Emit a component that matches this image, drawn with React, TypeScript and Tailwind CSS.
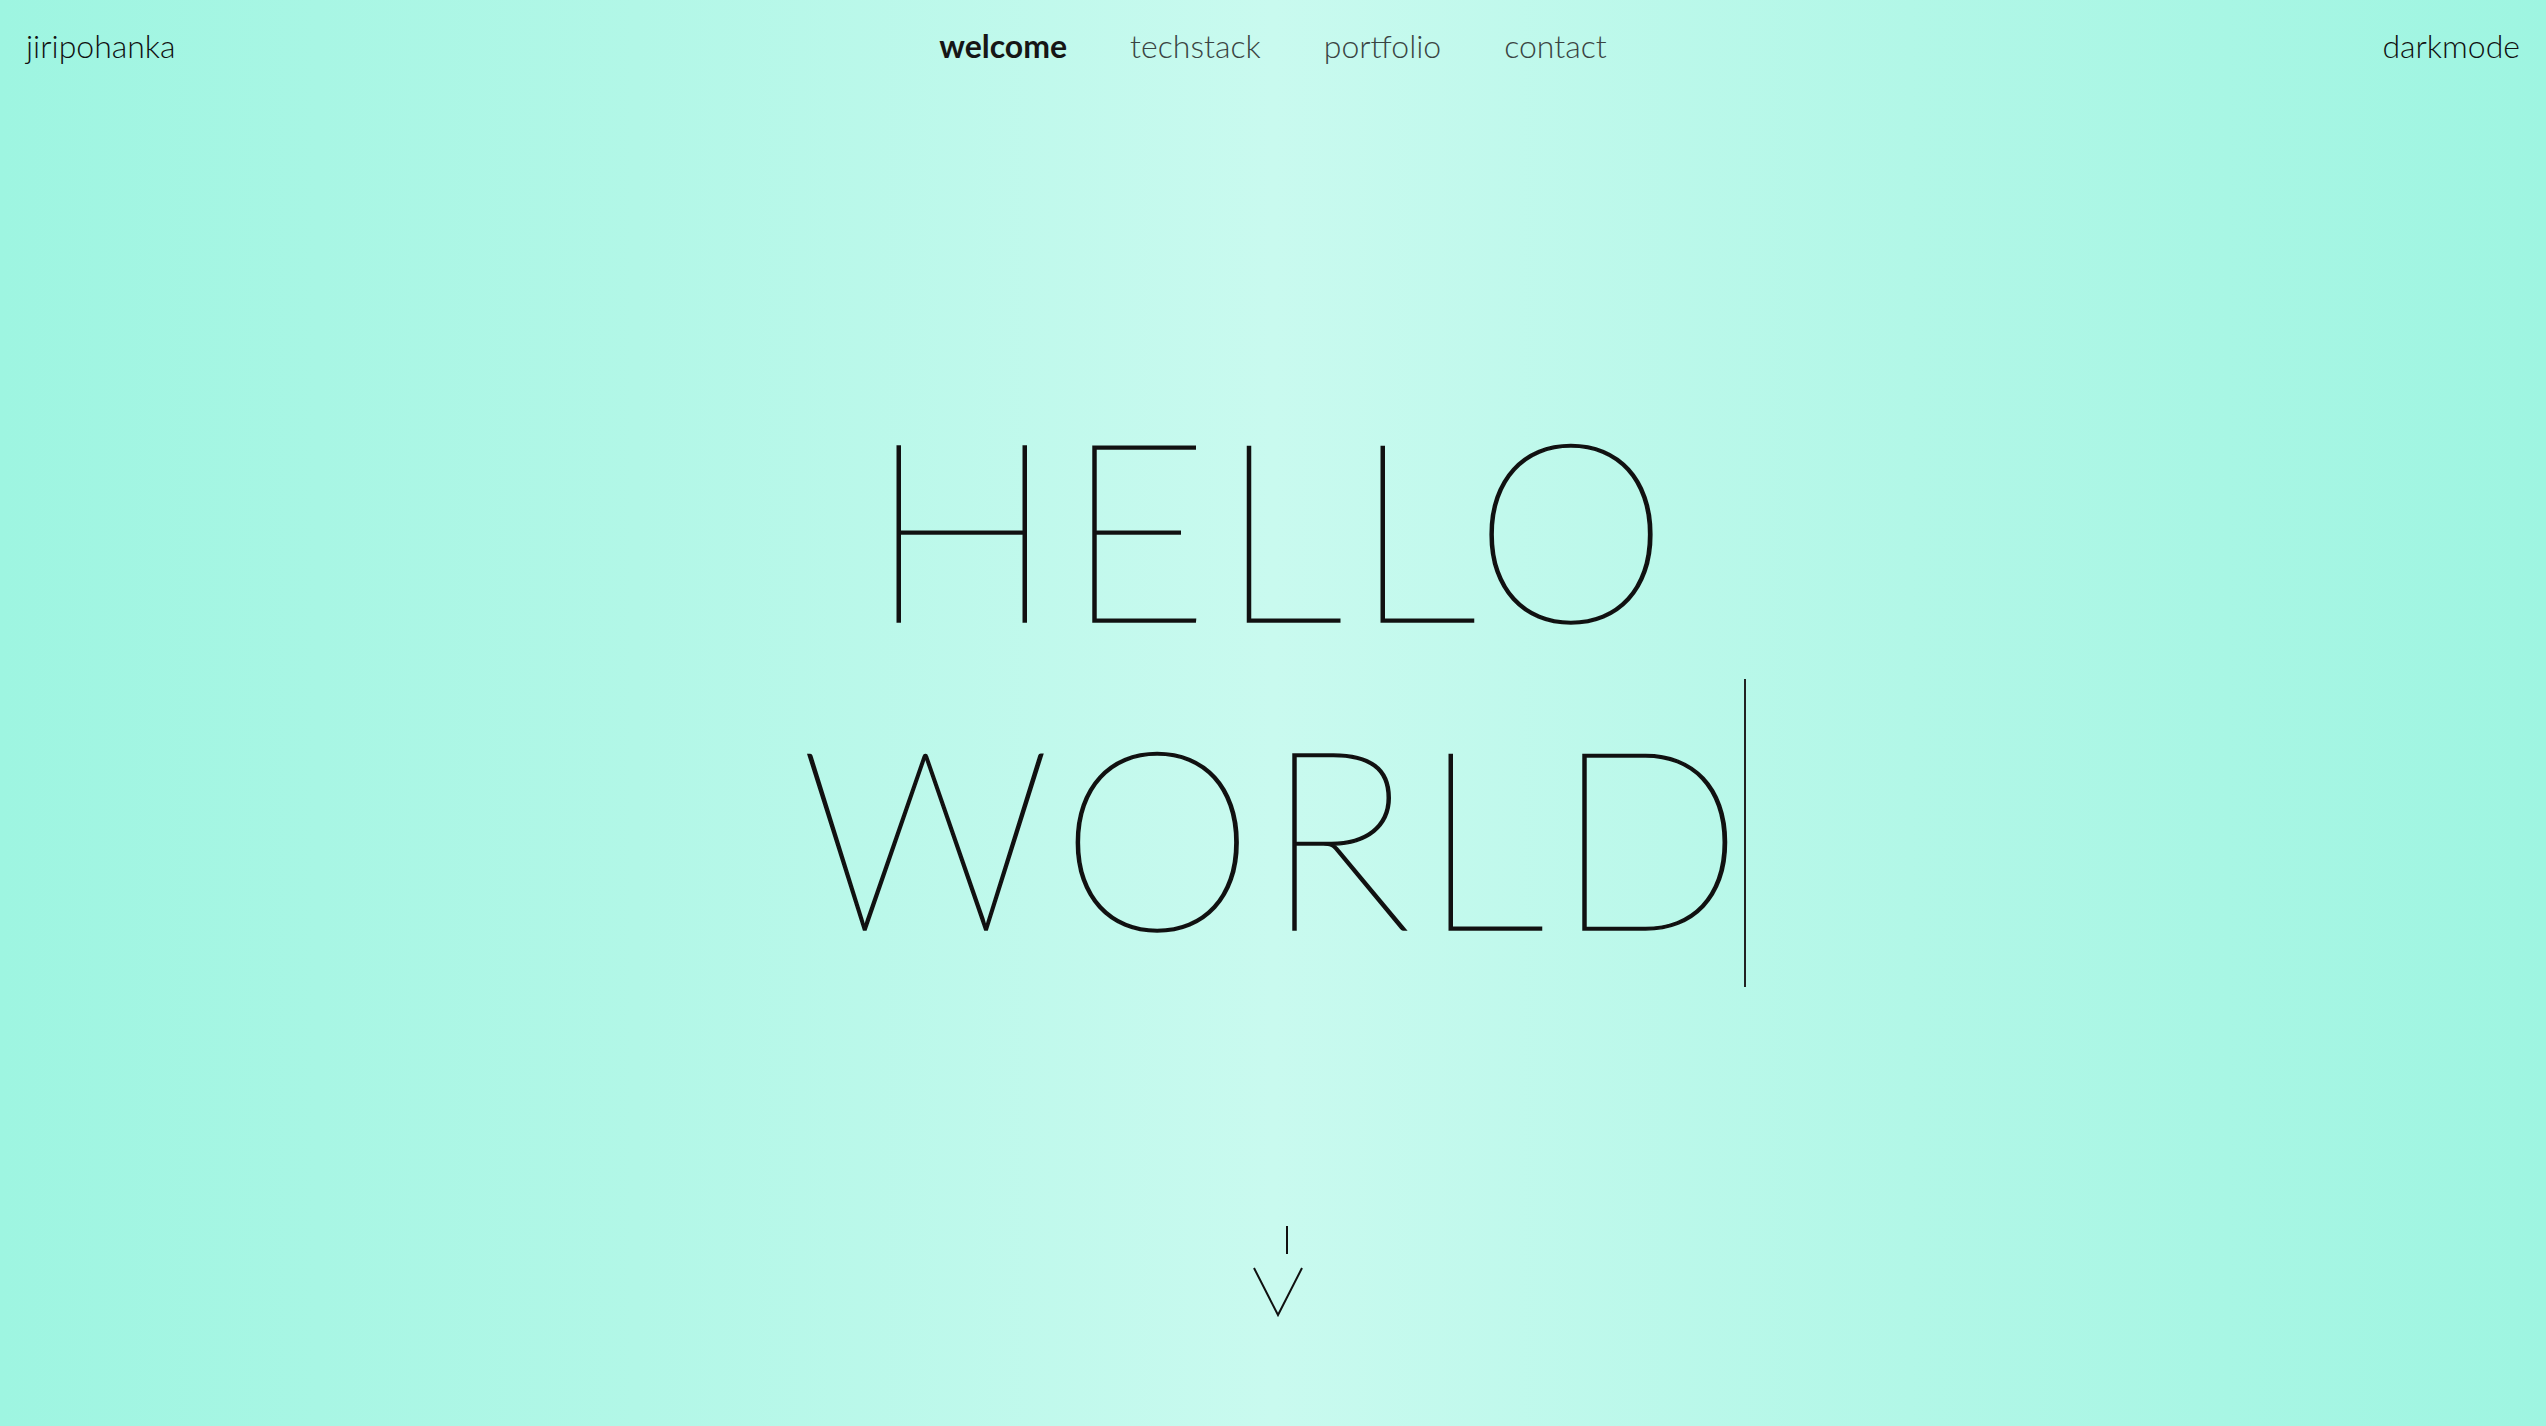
const navItems = [
  { label: "welcome", active: true },
  { label: "techstack", active: false },
  { label: "portfolio", active: false },
  { label: "contact", active: false },
];

const ScrollArrow = () => (
  <svg width="60" height="100" viewBox="0 0 60 100" fill="none" stroke="#111" strokeWidth="2">
    <line x1="44" y1="7" x2="44" y2="35" />
    <polyline points="11,49 35,96 59,49" />
  </svg>
);

export default function App() {
  return (
    <div
      className="flex h-[1426px] w-full flex-col overflow-hidden bg-[linear-gradient(to_right,#9ef5e1_0%,#b2f7e7_25%,#c9faef_50%,#b2f7e7_75%,#9ef5e1_100%)] text-[#111]"
      style={{ fontFamily: "Lato, 'Noto Sans', sans-serif" }}
    >
      <header className="relative flex h-[92px] items-center justify-between px-[26px] text-[32px] font-light">
        <span>jiripohanka</span>
        <nav className="absolute left-1/2 flex -translate-x-1/2 items-center gap-[63px]">
          {navItems.map((item) => (
            <a
              key={item.label}
              href="#"
              className={item.active ? "font-bold text-[#161616]" : "font-light text-[#3a4442]"}
            >
              {item.label}
            </a>
          ))}
        </nav>
        <span>darkmode</span>
      </header>

      <main className="flex flex-col items-center pt-[279px]">
        <h1 className="text-center text-[250px] leading-[308px] font-extralight tracking-[0.035em] [-webkit-text-stroke:1.5px_#111]">
          <span className="block">HELLO</span>
          <span className="inline-block border-r-2 border-[#222]">
            WORL<span className="tracking-normal">D</span>
          </span>
        </h1>
        <div className="mt-[232px]">
          <ScrollArrow />
        </div>
      </main>
    </div>
  );
}
